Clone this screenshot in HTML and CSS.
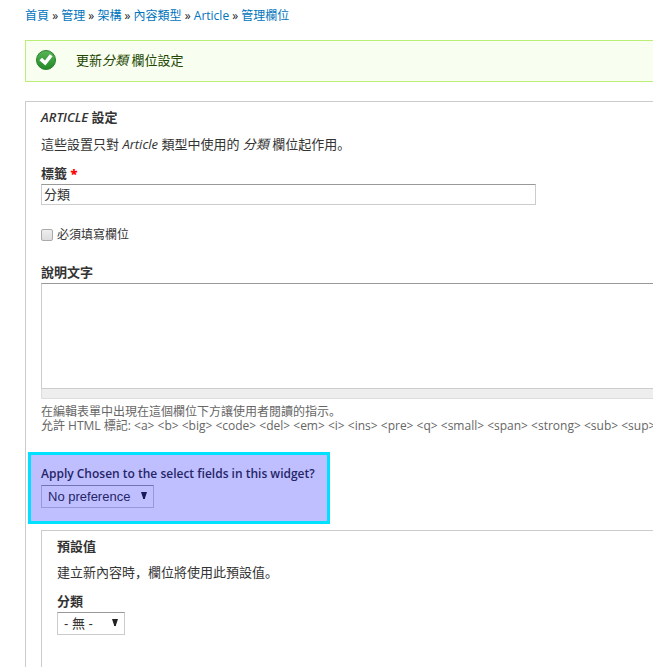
FILE: index.html
```html
<!DOCTYPE html>
<html lang="zh-Hans">
<head>
<meta charset="utf-8">
<title>管理欄位</title>
<link rel="stylesheet" href="styles.css">
</head>
<body>
<main class="page">
  <nav class="breadcrumb">
    <a href="#">首頁</a> » <a href="#">管理</a> » <a href="#">架構</a> » <a href="#">內容類型</a> » <a href="#">Article</a> » <a href="#">管理欄位</a>
  </nav>
  <div class="status" role="status">
    <svg class="status-icon" viewBox="0 0 20 20" aria-hidden="true">
      <defs>
        <linearGradient id="green" x1="0" y1="0" x2="0" y2="1">
          <stop offset="0" stop-color="#58b558"/>
          <stop offset="1" stop-color="#218a25"/>
        </linearGradient>
      </defs>
      <circle cx="10" cy="10" r="9.5" fill="url(#green)" stroke="#2b7d2e"/>
      <path d="M3.4 10.2 6 7.7 8.9 10.6 13.8 4.3 16.6 6.3 9.4 15.6Z" fill="#fff"/>
    </svg>
    <span>更新<em>分類</em> 欄位設定</span>
  </div>
  <form>
    <fieldset class="panel">
      <legend><em>ARTICLE</em> 設定</legend>
      <p>這些設置只對 <em>Article</em> 類型中使用的 <em>分類</em> 欄位起作用。</p>
      <div class="field">
        <label class="title" for="label">標籤 <span class="required">*</span></label>
        <input class="text" id="label" type="text" value="分類">
      </div>
      <div class="field check">
        <input id="required" type="checkbox">
        <label for="required">必須填寫欄位</label>
      </div>
      <div class="field">
        <label class="title" for="help">說明文字</label>
        <textarea id="help"></textarea>
        <div class="grip"></div>
        <div class="description">在編輯表單中出現在這個欄位下方讓使用者閱讀的指示。<br>允許 HTML 標記: &lt;a&gt; &lt;b&gt; &lt;big&gt; &lt;code&gt; &lt;del&gt; &lt;em&gt; &lt;i&gt; &lt;ins&gt; &lt;pre&gt; &lt;q&gt; &lt;small&gt; &lt;span&gt; &lt;strong&gt; &lt;sub&gt; &lt;sup&gt; &lt;tt&gt;</div>
      </div>
      <div class="field highlight">
        <label class="title" for="chosen">Apply Chosen to the select fields in this widget?</label>
        <div class="select">
          <select id="chosen"><option>No preference</option></select>
          <svg viewBox="0 0 6 7" aria-hidden="true"><path d="M0 0H6L4 6V7H2V6Z"/></svg>
        </div>
      </div>
      <fieldset class="panel defaults">
        <legend>預設值</legend>
        <p>建立新內容時，欄位將使用此預設值。</p>
        <div class="field">
          <label class="title" for="term">分類</label>
          <div class="select">
            <select id="term"><option>- 無 -</option></select>
            <svg viewBox="0 0 6 7" aria-hidden="true"><path d="M0 0H6L4 6V7H2V6Z"/></svg>
          </div>
        </div>
      </fieldset>
    </fieldset>
  </form>
</main>
</body>
</html>
```

FILE: styles.css
```css
* {
  box-sizing: border-box;
}

body {
  margin: 0;
  height: 100vh;
  overflow: hidden;
  background: #fff;
  color: #333;
  font: 13px/20px "Open Sans", "Noto Sans CJK SC", sans-serif;
}

/* Panels run on past the right edge of the window. */
.page {
  margin: 0 -24px 0 25px;
  padding-top: 6px;
}

.breadcrumb {
  margin-bottom: 14px;
  color: #222;
  font-size: 12px;
}

a {
  color: #0074bd;
  text-decoration: none;
}

.status {
  display: flex;
  align-items: center;
  gap: 20px;
  margin-bottom: 19px;
  padding: 9px 10px 11px;
  border: 1px solid #be7;
  background: #f8fff0;
  color: #234600;
}

.status-icon {
  width: 20px;
  height: 20px;
}

.panel {
  min-width: 0;
  margin: 0;
  padding: 5px 15px 0;
  border: 1px solid #ccc;
}

.defaults {
  padding-bottom: 30px;
}

legend {
  float: left;
  width: 100%;
  padding: 0;
  font-weight: 600;
}

p {
  clear: both;
  margin: 0;
  padding-top: 7px;
}

.defaults p {
  padding-top: 6px;
}

.field {
  margin: 9px 0 20px;
}

.title {
  display: block;
  margin-bottom: 1px;
  font-weight: 600;
}

.required {
  color: #f00;
  font-weight: 800;
}

.text,
textarea,
select {
  display: block;
  margin: 0;
  border: 1px solid #ccc;
  border-top-color: #999;
  border-radius: 0;
  background: #fff;
  color: #333;
}

.text {
  width: 495px;
  max-width: 100%;
  height: 21px;
  padding: 0 2px 2px;
  font: inherit;
}

.check {
  display: flex;
  align-items: center;
  gap: 4px;
  margin-bottom: 17px;
  font-size: 12px;
}

.check input {
  appearance: none;
  width: 12px;
  height: 12px;
  margin: 0;
  border: 1px solid #aaa;
  border-radius: 2px;
  background: linear-gradient(#eee, #ddd);
}

textarea {
  width: 100%;
  height: 106px;
  resize: none;
}

.grip {
  height: 10px;
  border: 1px solid #ddd;
  border-top: 0;
  background: #eee;
}

.description {
  margin-top: 6px;
  color: #666;
  font-size: 12px;
  line-height: 14px;
  white-space: nowrap;
}

.highlight {
  position: relative;
  width: 302px;
  margin: -1px 0 6px -13px;
  padding: 12px 13px 16px;
}

.highlight .title {
  font-size: 12px;
  white-space: nowrap;
}

/* Translucent marker laid over the whole field. */
.highlight::after {
  content: "";
  position: absolute;
  inset: 0;
  border: 3px solid #00e0ff;
  background: rgba(0, 0, 255, 0.25);
  background-clip: padding-box;
  pointer-events: none;
}

.select {
  position: relative;
  width: max-content;
}

select {
  appearance: none;
  height: 23px;
  padding: 0 22px 0 6px;
  font: 13px "Liberation Sans", "Noto Sans CJK SC", sans-serif;
}

.defaults select {
  padding-right: 31px;
}

.select svg {
  position: absolute;
  top: 7px;
  right: 7px;
  width: 6px;
  height: 7px;
  fill: #222;
  pointer-events: none;
}
```
